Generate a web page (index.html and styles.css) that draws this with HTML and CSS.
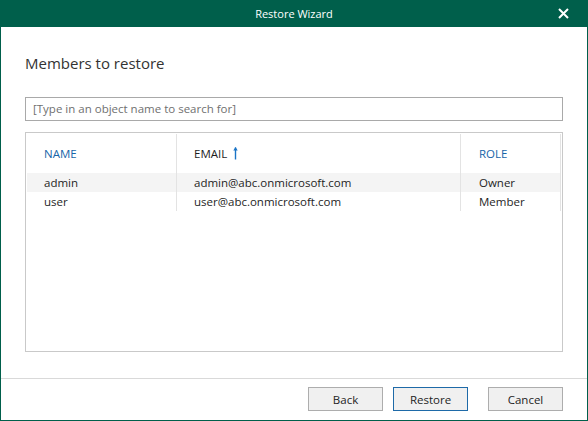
FILE: index.html
```html
<!DOCTYPE html>
<html>
<head>
<meta charset="utf-8">
<title>Restore Wizard</title>
<link rel="stylesheet" href="styles.css">
</head>
<body>
<div class="window">
  <div class="titlebar">
    <span class="tb-spacer"></span>
    <span class="tb-title">Restore Wizard</span>
    <span class="tb-actions">
      <svg class="close-icon" width="11" height="11" viewBox="0 0 11 11"><path d="M1 1 L10 10 M10 1 L1 10" stroke="#fff" stroke-width="2" fill="none"/></svg>
    </span>
  </div>
  <div class="content">
    <h1 class="heading">Members to restore</h1>
    <div class="search">[Type in an object name to search for]</div>
    <div class="grid-box">
      <div class="grid">
        <div class="cell head link">NAME</div>
        <div class="cell head">EMAIL
          <svg class="sort-arrow" width="5" height="14" viewBox="0 0 5 14"><path d="M2.5 1.5 V13.5" stroke="#1a74c6" stroke-width="1.4" fill="none"/><path d="M0.3 4.6 L2.5 1 L4.7 4.6 Z" fill="#1a74c6"/></svg>
        </div>
        <div class="cell head link">ROLE</div>

        <div class="cell row sel">admin</div>
        <div class="cell row sel">admin@abc.onmicrosoft.com</div>
        <div class="cell row sel">Owner</div>

        <div class="cell row">user</div>
        <div class="cell row">user@abc.onmicrosoft.com</div>
        <div class="cell row">Member</div>
      </div>
    </div>
  </div>
  <div class="footer">
    <button class="btn">Back</button>
    <button class="btn primary">Restore</button>
    <button class="btn cancel">Cancel</button>
  </div>
</div>
</body>
</html>
```
FILE: styles.css
```css
html, body {
  margin: 0;
  padding: 0;
  background: #ffffff;
}

body {
  font-family: "Segoe UI", "Open Sans", "Noto Sans", sans-serif;
  font-size: 11.5px;
  color: #1e1e1e;
}

.window {
  width: 588px;
  height: 421px;
  box-sizing: border-box;
  border: 1px solid #005f4b;
  border-top: none;
  display: flex;
  flex-direction: column;
  background: #ffffff;
}

.titlebar {
  height: 27px;
  margin: 0 -1px;
  background: #005f4b;
  color: #ffffff;
  display: grid;
  grid-template-columns: 1fr auto 1fr;
  align-items: center;
  flex: none;
}

.tb-title {
  font-size: 11px;
  line-height: 27px;
}

.tb-actions {
  display: flex;
  justify-content: flex-end;
  padding-right: 19px;
}

.close-icon {
  display: block;
}

.content {
  flex: 1;
  padding: 26px 24px 0 24px;
  display: flex;
  flex-direction: column;
}

.heading {
  margin: 0 0 24px 0;
  font-size: 15px;
  line-height: 20px;
  font-weight: 400;
  color: #333333;
  height: 20px;
}

.search {
  height: 24px;
  box-sizing: border-box;
  border: 1px solid #a9a9a9;
  padding: 0 7px;
  line-height: 22px;
  color: #707070;
  font-size: 11.5px;
}

.grid-box {
  margin-top: 11px;
  height: 220px;
  box-sizing: border-box;
  border: 1px solid #c9c9c9;
  padding: 1px;
}

.grid {
  display: grid;
  grid-template-columns: 150px 284px 100px;
}

.cell {
  border-right: 1px solid #e3e3e3;
  padding-left: 17px;
  white-space: nowrap;
  display: flex;
  align-items: center;
}

.cell:nth-child(3n) {
  padding-left: 18px;
}

.head {
  height: 39px;
  color: #1e1e1e;
}

.head.link {
  color: #1765a8;
}

.sort-arrow {
  margin-left: 6px;
  margin-top: -2px;
}

.row {
  height: 19px;
}

.row.sel {
  background: #f4f4f4;
}

.footer {
  flex: none;
  border-top: 1px solid #d9d9d9;
  padding: 8px 24px 9px 24px;
  display: flex;
  justify-content: flex-end;
  gap: 10px;
}

.btn {
  width: 75px;
  height: 24px;
  box-sizing: border-box;
  border: 1px solid #adadad;
  background: #f0f0f0;
  font-family: inherit;
  font-size: 11.5px;
  color: #1e1e1e;
  padding: 0;
  margin: 0;
}

.btn.primary {
  border-color: #1e6aa8;
}

.btn.cancel {
  margin-left: 10px;
}
```
